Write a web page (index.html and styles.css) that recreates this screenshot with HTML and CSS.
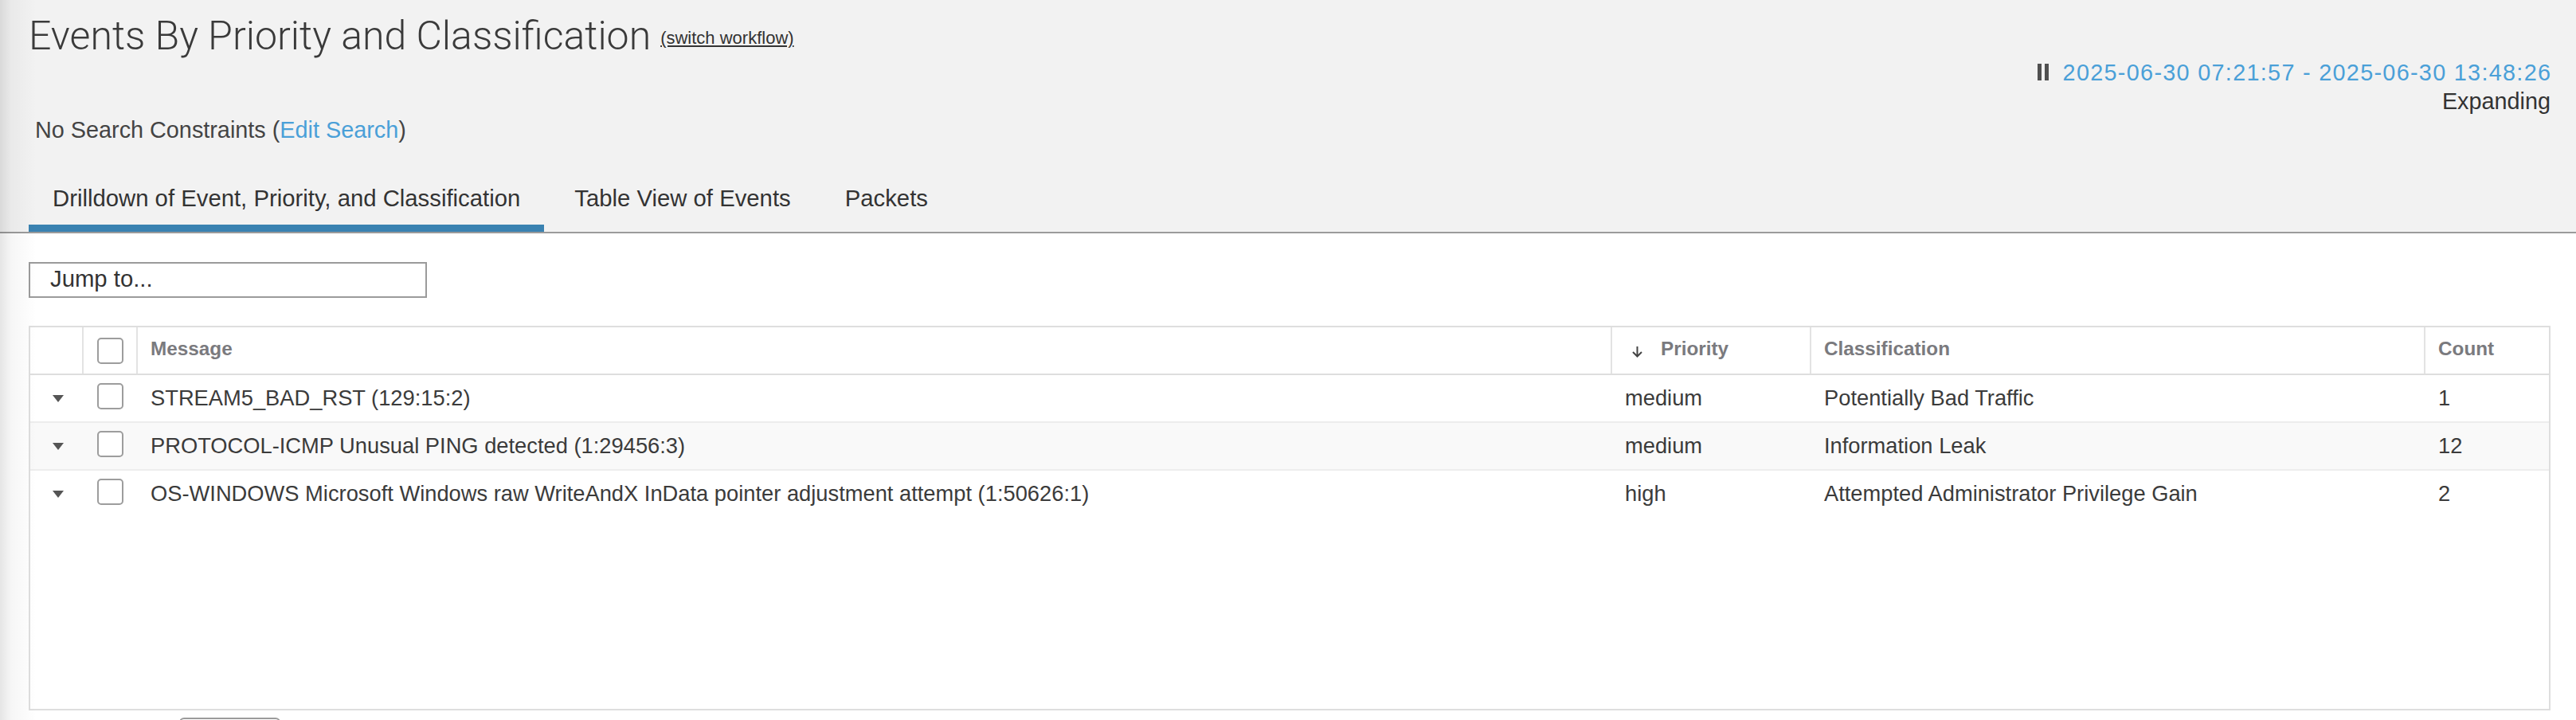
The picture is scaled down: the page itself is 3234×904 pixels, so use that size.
FILE: index.html
```html
<!DOCTYPE html>
<html lang="en">
<head>
<meta charset="utf-8">
<title>Events By Priority and Classification</title>
<link rel="stylesheet" href="styles.css">
</head>
<body>
<div class="shade"></div>
<header class="top">
  <h1 class="title">Events By Priority and Classification<a class="switch" href="#">(switch workflow)</a></h1>
  <div class="timerange">
    <div class="range"><span class="pause"><i></i><i></i></span><a class="range-link" href="#">2025-06-30 07:21:57 - 2025-06-30 13:48:26</a></div>
    <div class="expanding">Expanding</div>
  </div>
  <div class="constraints">No Search Constraints (<a href="#">Edit Search</a>)</div>
  <nav class="tabs">
    <a class="tab active" href="#">Drilldown of Event, Priority, and Classification</a>
    <a class="tab" href="#">Table View of Events</a>
    <a class="tab" href="#">Packets</a>
  </nav>
</header>
<main class="content">
  <div class="jump">Jump to...</div>
  <div class="grid">
    <div class="row head">
      <div class="cell"></div>
      <div class="cell ctr"><span class="cb"></span></div>
      <div class="cell">Message</div>
      <div class="cell sort"><svg class="arrow" width="15" height="15" viewBox="0 0 15 15"><path d="M7.5 1V13.5M2 8L7.5 13.5L13 8" fill="none" stroke="#444" stroke-width="2"/></svg><span>Priority</span></div>
      <div class="cell">Classification</div>
      <div class="cell">Count</div>
    </div>
    <div class="row">
      <div class="cell ctr"><span class="tri"></span></div>
      <div class="cell ctr"><span class="cb"></span></div>
      <div class="cell">STREAM5_BAD_RST (129:15:2)</div>
      <div class="cell">medium</div>
      <div class="cell">Potentially Bad Traffic</div>
      <div class="cell">1</div>
    </div>
    <div class="row alt">
      <div class="cell ctr"><span class="tri"></span></div>
      <div class="cell ctr"><span class="cb"></span></div>
      <div class="cell">PROTOCOL-ICMP Unusual PING detected (1:29456:3)</div>
      <div class="cell">medium</div>
      <div class="cell">Information Leak</div>
      <div class="cell">12</div>
    </div>
    <div class="row">
      <div class="cell ctr"><span class="tri"></span></div>
      <div class="cell ctr"><span class="cb"></span></div>
      <div class="cell">OS-WINDOWS Microsoft Windows raw WriteAndX InData pointer adjustment attempt (1:50626:1)</div>
      <div class="cell">high</div>
      <div class="cell">Attempted Administrator Privilege Gain</div>
      <div class="cell">2</div>
    </div>
  </div>
  <div class="pager"></div>
</main>
</body>
</html>
```
FILE: styles.css
```css
* { box-sizing: border-box; }
html, body { margin: 0; }
body {
  font-family: "Liberation Sans", Arial, sans-serif;
  color: #333;
  background: #fff;
  width: 3234px;
  height: 904px;
  overflow: hidden;
  position: relative;
}
a { text-decoration: none; color: inherit; }

.shade {
  position: absolute;
  left: 0; top: 0; bottom: 0;
  width: 50px;
  background: linear-gradient(to right, rgba(0,0,0,0.10), rgba(0,0,0,0.035) 14px, rgba(0,0,0,0) 46px);
  pointer-events: none;
  z-index: 5;
}

.top {
  background: #f2f2f2;
  padding: 15px 32px 0 36px;
  border-bottom: 2px solid #9b9b9b;
}
.title {
  margin: 0;
  font-family: Roboto, "Liberation Sans", sans-serif;
  font-weight: 300;
  font-size: 50px;
  line-height: 60px;
  color: #3a3a3a;
  white-space: nowrap;
}
.switch {
  font-family: "Liberation Sans", Arial, sans-serif;
  font-size: 22px;
  line-height: 22px;
  font-weight: 400;
  color: #333;
  text-decoration: underline;
  vertical-align: 7px;
  margin-left: 12px;
}
.timerange {
  margin-top: -2px;
  text-align: right;
  font-size: 28.8px;
  line-height: 36px;
}
.range {
  display: flex;
  justify-content: flex-end;
  align-items: center;
  gap: 18px;
}
.range-link { color: #4aa0d8; letter-spacing: 1.3px; margin-right: -1.3px; }
.pause { display: inline-flex; gap: 4px; height: 21px; margin-top: -2px; }
.pause i { width: 5px; background: #505050; }
.expanding { color: #333; }

.constraints {
  padding-left: 8px;
  font-size: 28.8px;
  line-height: 36px;
  color: #444;
}
.constraints a { color: #4aa0d8; }

.tabs { display: flex; gap: 8px; margin-top: 50px; }
.tab {
  padding: 0 30px 15px;
  font-size: 29.3px;
  line-height: 36px;
  color: #333;
  border-bottom: 9px solid transparent;
}
.tab.active { border-bottom-color: #3a82b1; }

.content { padding: 36px 32px 0 36px; }
.jump {
  width: 500px;
  height: 45px;
  border: 2px solid #9b9b9b;
  background: #fff;
  padding: 0 0 3px 25px;
  font-size: 29.3px;
  line-height: 38px;
  color: #333;
}
.grid {
  margin-top: 35px;
  height: 483px;
  border: 2px solid #dedede;
  overflow: hidden;
}
.row {
  display: grid;
  grid-template-columns: 65px 68px 1fr 250px 771px 157px;
  height: 60px;
  border-bottom: 2px solid #ededed;
  font-size: 27.3px;
  color: #3b3b3b;
}
.row:last-child { border-bottom-color: transparent; }
.row.alt { background: #f9f9f9; }
.row.head {
  border-bottom-color: #dedede;
  font-size: 24.3px;
  font-weight: bold;
  color: #7a7a7e;
}
.cell {
  display: flex;
  align-items: center;
  padding: 0 16px;
  white-space: nowrap;
  overflow: hidden;
}
.head .cell { padding-bottom: 4px; }
.head .cell.ctr { padding-bottom: 0; }
.cell + .cell { border-left: 2px solid transparent; }
.head .cell + .cell { border-left-color: #e3e3e3; }
.cell.ctr { justify-content: center; padding: 0; }
.cb {
  width: 33px;
  height: 33px;
  border: 2px solid #9d9d9d;
  border-radius: 5px;
  background: #fff;
}
.row:not(.head) .cb { margin-bottom: 5px; }
.tri {
  width: 0; height: 0;
  border-left: 7.5px solid transparent;
  border-right: 7.5px solid transparent;
  border-top: 9px solid #555;
  margin-left: 4px;
}
.sort .arrow { margin-left: 8px; margin-right: 22px; margin-top: 6px; flex: none; }

.pager {
  margin-top: 9px;
  margin-left: 189px;
  width: 127px;
  height: 40px;
  border: 2px solid #9b9b9b;
  border-radius: 6px;
}
```
